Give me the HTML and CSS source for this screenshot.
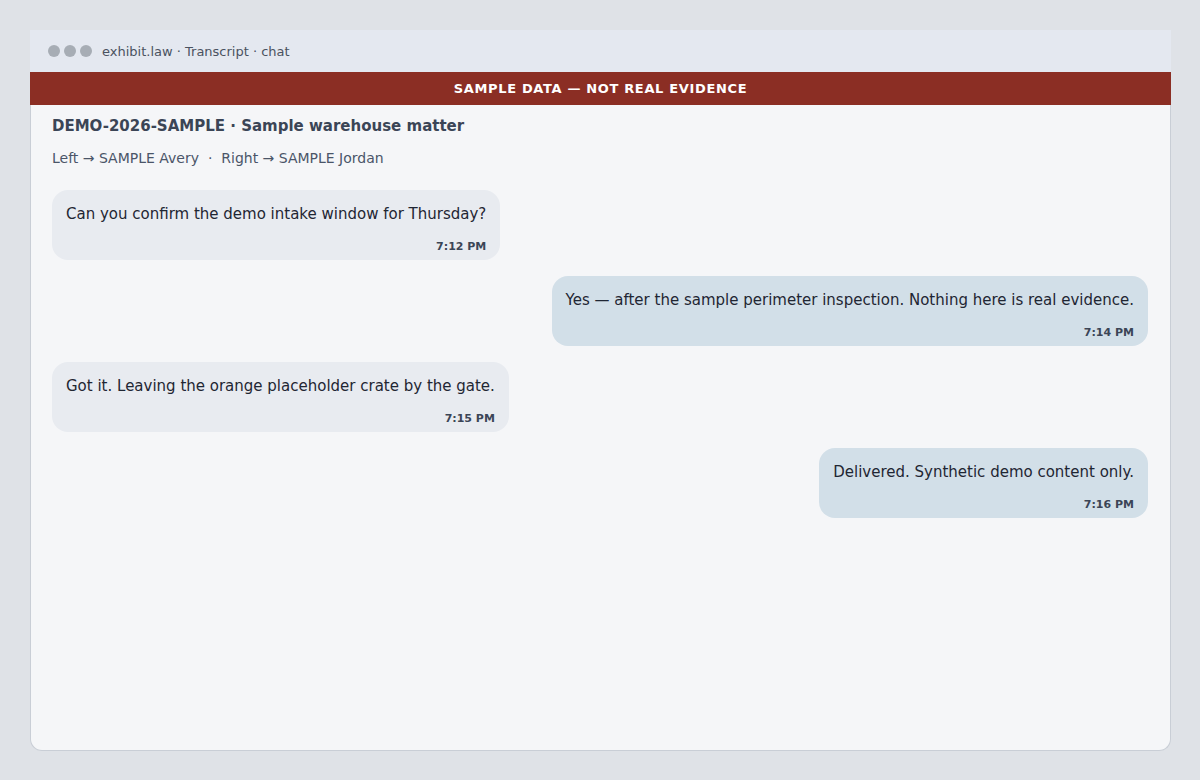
FILE: index.html
```html
<!DOCTYPE html>
<html lang="en">
<head>
<meta charset="utf-8">
<title>exhibit.law · Transcript · chat</title>
<link rel="stylesheet" href="styles.css">
</head>
<body>
<div class="window">
  <div class="titlebar">
    <div class="dots"><span class="dot"></span><span class="dot"></span><span class="dot"></span></div>
    <div class="title">exhibit.law · Transcript · chat</div>
  </div>
  <div class="banner">SAMPLE DATA — NOT REAL EVIDENCE</div>
  <div class="content">
    <div class="heading">DEMO-2026-SAMPLE · Sample warehouse matter</div>
    <div class="legend">Left → SAMPLE Avery &nbsp;·&nbsp; Right → SAMPLE Jordan</div>
    <div class="messages">
      <div class="bubble left">
        <div class="text">Can you confirm the demo intake window for Thursday?</div>
        <div class="time">7:12 PM</div>
      </div>
      <div class="bubble right">
        <div class="text">Yes — after the sample perimeter inspection. Nothing here is real evidence.</div>
        <div class="time">7:14 PM</div>
      </div>
      <div class="bubble left">
        <div class="text">Got it. Leaving the orange placeholder crate by the gate.</div>
        <div class="time">7:15 PM</div>
      </div>
      <div class="bubble right">
        <div class="text">Delivered. Synthetic demo content only.</div>
        <div class="time">7:16 PM</div>
      </div>
    </div>
  </div>
</div>
</body>
</html>
```
FILE: styles.css
```css
html, body {
  margin: 0;
  padding: 0;
}
body {
  background: #dfe2e7;
  font-family: "DejaVu Sans", "Liberation Sans", sans-serif;
  padding: 30px 0 0 30px;
  height: 780px;
  box-sizing: border-box;
}
.window {
  width: 1141px;
  height: 721px;
  display: flex;
  flex-direction: column;
}
.titlebar {
  height: 42px;
  background: #e4e8f0;
  display: flex;
  align-items: center;
  padding-left: 18px;
  flex-shrink: 0;
}
.dots {
  display: flex;
  gap: 4px;
}
.dot {
  width: 12px;
  height: 12px;
  border-radius: 50%;
  background: #a7adb5;
}
.title {
  margin-left: 10px;
  font-size: 13px;
  color: #4a5260;
}
.banner {
  height: 33px;
  background: #8b2e24;
  color: #ffffff;
  font-weight: bold;
  font-size: 13px;
  letter-spacing: 0.65px;
  display: flex;
  align-items: center;
  justify-content: center;
  flex-shrink: 0;
}
.content {
  flex: 1;
  background: #f5f6f8;
  border: 1px solid #c9ced6;
  border-top: none;
  border-radius: 0 0 12px 12px;
  padding: 11px 22px 0 21px;
}
.heading {
  font-size: 15px;
  line-height: 20px;
  font-weight: bold;
  color: #3b4556;
}
.legend {
  margin-top: 12px;
  font-size: 14px;
  line-height: 20px;
  color: #4a5568;
}
.messages {
  margin-top: 22px;
  display: flex;
  flex-direction: column;
  gap: 16px;
}
.bubble {
  border-radius: 16px;
  padding: 14px 14px 6px 14px;
  max-width: 640px;
}
.bubble.left {
  align-self: flex-start;
  background: #e8ebf0;
}
.bubble.right {
  align-self: flex-end;
  background: #d2dfe8;
}
.text {
  font-size: 15px;
  line-height: 21px;
  color: #1f2633;
}
.time {
  margin-top: 14px;
  font-size: 11px;
  line-height: 15px;
  font-weight: bold;
  color: #3b4556;
  text-align: right;
}
```
